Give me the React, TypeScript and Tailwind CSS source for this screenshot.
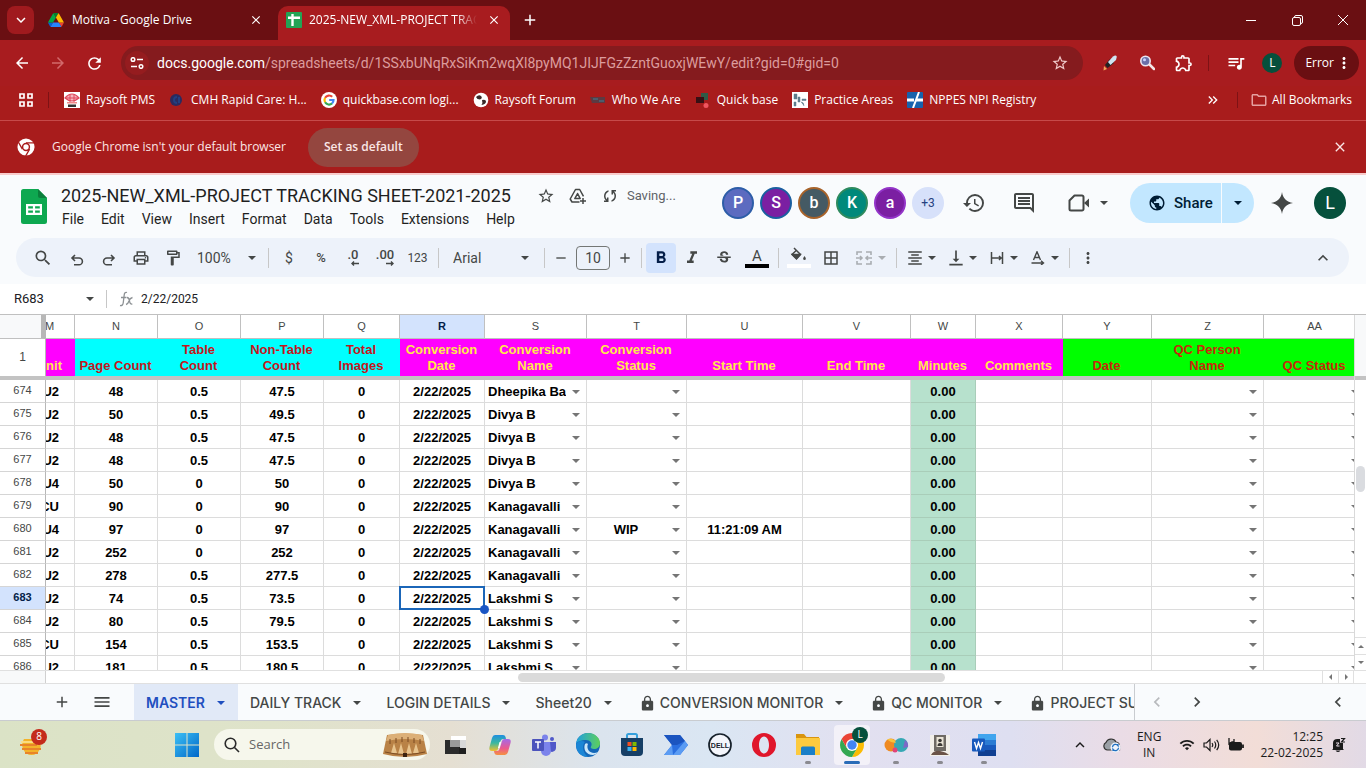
import type { ReactNode } from "react";
import clsx from "clsx";
import {
  MdAdd,
  MdArrowBack,
  MdArrowForward,
  MdBorderAll,
  MdChevronLeft,
  MdChevronRight,
  MdClose,
  MdFormatAlignCenter,
  MdFormatBold,
  MdFormatItalic,
  MdHistory,
  MdKeyboardArrowDown,
  MdKeyboardArrowUp,
  MdKeyboardDoubleArrowRight,
  MdLock,
  MdMenu,
  MdMoreVert,
  MdOutlineComment,
  MdOutlineExtension,
  MdOutlineFolder,
  MdOutlineFormatPaint,
  MdOutlinePrint,
  MdPublic,
  MdQueueMusic,
  MdRefresh,
  MdRemove,
  MdSearch,
  MdStarBorder,
  MdStrikethroughS,
  MdVerticalAlignBottom,
  MdWifi,
} from "react-icons/md";

const chromeFont = "font-['Open_Sans','Noto_Sans',sans-serif]";
const sheetsFont = "font-[Roboto,'Liberation_Sans',sans-serif]";

function Caret({ className = "text-[#444746]" }: { className?: string }) {
  return (
    <svg viewBox="0 0 8 4" className={clsx("h-1 w-2 shrink-0", className)} fill="currentColor" aria-hidden="true">
      <path d="M0 0h8L4 4z" />
    </svg>
  );
}

/* ---------- Logos ---------- */

function DriveLogo() {
  return (
    <svg viewBox="0 0 88 78" className="h-[14px] w-4" aria-hidden="true">
      <path fill="#0066da" d="m6.6 66.9 3.85 6.6c.8 1.4 2 2.5 3.3 3.3L27.5 53H0c0 1.55.4 3.1 1.2 4.5z" />
      <path fill="#00ac47" d="M43.65 25 29.9 1.2c-1.35.8-2.5 1.9-3.3 3.3L1.2 48.5C.4 49.9 0 51.5 0 53h27.5z" />
      <path fill="#ea4335" d="M73.55 76.8c1.35-.8 2.5-1.9 3.3-3.3l1.6-2.75L86.1 57.5c.8-1.4 1.2-2.95 1.2-4.5H59.8l5.85 11.5z" />
      <path fill="#00832d" d="M43.65 25 57.4 1.2C56.05.4 54.5 0 52.9 0H34.4c-1.6 0-3.15.45-4.5 1.2z" />
      <path fill="#2684fc" d="M59.8 53H27.5L13.75 76.8c1.35.8 2.9 1.2 4.5 1.2h50.8c1.6 0 3.15-.45 4.5-1.2z" />
      <path fill="#ffba00" d="M73.4 26.5 60.7 4.5c-.8-1.4-1.95-2.5-3.3-3.3L43.65 25 59.8 53h27.45c0-1.55-.4-3.1-1.2-4.5z" />
    </svg>
  );
}

function SheetsFavicon() {
  return (
    <svg viewBox="0 0 16 16" className="size-4 shrink-0" aria-hidden="true">
      <rect width="16" height="16" rx="1" fill="#23a455" />
      <path d="M2 4.500h12v2.400H7.700V14H5.300V6.900H2z M5.300 2h2.400v3H5.300z" fill="#fff" />
    </svg>
  );
}

function SheetsLogo() {
  return (
    <svg viewBox="0 0 26 35" className="h-[35px] w-[26px]" aria-hidden="true">
      <path d="M2.500 0H17l9 9v23.500A2.500 2.500 0 0 1 23.500 35h-21A2.500 2.500 0 0 1 0 32.500v-30A2.500 2.500 0 0 1 2.500 0z" fill="#0ea850" />
      <path d="M17 0l9 9h-7a2 2 0 0 1-2-2z" fill="#0a7f3b" />
      <path d="M5 15h16v11H5z M7.200 17.200v2.300h4.700v-2.300z M14.100 17.200v2.300h4.700v-2.300z M7.200 21.500v2.300h4.700v-2.300z M14.100 21.500v2.300h4.700v-2.300z" fill="#fff" fillRule="evenodd" />
    </svg>
  );
}

function ChromeMono() {
  return (
    <svg viewBox="0 0 20 20" className="size-[18px]" aria-hidden="true">
      <circle cx="10" cy="10" r="9.500" fill="#fff" />
      <circle cx="10" cy="10" r="4.600" fill="#a81c1c" />
      <circle cx="10" cy="10" r="3" fill="#fff" />
      <path d="M10 5.400h9M6 12.300 1.600 4.700M14 12.300 9.600 20" stroke="#a81c1c" strokeWidth="1.500" />
    </svg>
  );
}

function ChromeColor({ className }: { className: string }) {
  return (
    <svg viewBox="0 0 24 24" className={className} aria-hidden="true">
      <path d="M12 6h10.390A12 12 0 0 1 12 24l5.200-9z" fill="#fbbc04" />
      <path d="M6.800 15 1.610 6A12 12 0 0 0 12 24l5.200-9z" fill="#34a853" />
      <path d="M12 6h10.390A12 12 0 0 0 1.610 6l5.190 9z" fill="#ea4335" />
      <circle cx="12" cy="12" r="6" fill="#fff" />
      <circle cx="12" cy="12" r="4.700" fill="#4285f4" />
    </svg>
  );
}

function GoogleG() {
  return (
    <svg viewBox="0 0 16 16" className="size-4" aria-hidden="true">
      <circle cx="8" cy="8" r="8" fill="#fff" />
      <g fill="none" strokeWidth="2.200">
        <path d="M11.200 4.800A4.500 4.500 0 0 0 4.100 5.800" stroke="#ea4335" />
        <path d="M4.100 5.800a4.500 4.500 0 0 0 0 4.500" stroke="#fbbc04" />
        <path d="M4.100 10.300a4.500 4.500 0 0 0 6.900 1.100" stroke="#34a853" />
        <path d="M11 11.400A4.500 4.500 0 0 0 12.500 8H8.200" stroke="#4285f4" />
      </g>
    </svg>
  );
}

/* ---------- Browser window ---------- */

function TabStrip() {
  return (
    <div className="flex h-10 items-center bg-[#6a0f12] text-xs text-white">
      <button aria-label="Search tabs" className="ml-[7px] flex h-7 w-[27px] items-center justify-center rounded-lg bg-[#a01a1e]">
        <MdKeyboardArrowDown className="size-[18px]" />
      </button>
      <div className="ml-[14px] flex w-[230px] items-center gap-2">
        <DriveLogo />
        <span>Motiva - Google Drive</span>
        <button aria-label="Close Motiva tab" className="mr-[15px] ml-auto">
          <MdClose className="size-[14px]" />
        </button>
      </div>
      <div className="mt-1.5 flex w-[232px] items-center gap-[7px] self-stretch rounded-t-[10px] bg-[#a81c1f] pr-[9px] pb-1.5 pl-2">
        <SheetsFavicon />
        <span className="w-[168px] overflow-hidden whitespace-nowrap [mask-image:linear-gradient(90deg,#000_88%,transparent)]">2025-NEW_XML-PROJECT TRACKING SHEET</span>
        <button aria-label="Close sheet tab" className="ml-auto">
          <MdClose className="size-[14px]" />
        </button>
      </div>
      <button aria-label="New tab" className="ml-[11px]">
        <MdAdd className="size-[18px]" />
      </button>
      <div className="ml-auto flex items-center">
        <button aria-label="Minimize" className="flex w-[46px] justify-center">
          <svg viewBox="0 0 10 10" className="size-[10px]" stroke="currentColor"><path d="M0 5.500h10" /></svg>
        </button>
        <button aria-label="Restore" className="flex w-[46px] justify-center">
          <svg viewBox="0 0 11 11" className="size-[11px]" stroke="currentColor" fill="none">
            <rect x=".5" y="2.500" width="8" height="8" rx="1.500" />
            <path d="M2.500 2.500V2A1.500 1.500 0 0 1 4 .5h5A1.500 1.500 0 0 1 10.500 2v5A1.500 1.500 0 0 1 9 8.500h-.5" />
          </svg>
        </button>
        <button aria-label="Close window" className="flex w-[46px] justify-center">
          <svg viewBox="0 0 10 10" className="size-[10px]" stroke="currentColor"><path d="M0 0l10 10M10 0 0 10" /></svg>
        </button>
      </div>
    </div>
  );
}

function AddressBar() {
  return (
    <div className="flex h-[46px] items-center bg-[#a81c1f] pr-[7px] pl-1 text-white">
      <button aria-label="Back" className="flex w-9 justify-center"><MdArrowBack className="size-[18px]" /></button>
      <button aria-label="Forward" className="flex w-9 justify-center text-[#d2696b]"><MdArrowForward className="size-[18px]" /></button>
      <button aria-label="Reload" className="flex w-9 justify-center"><MdRefresh className="size-[19px]" /></button>
      <div className="ml-[9px] flex h-[34px] min-w-0 flex-1 items-center rounded-full bg-[#851b1e] pr-3.5 pl-1">
        <button aria-label="View site information" className="flex size-6 items-center justify-center rounded-full bg-[#951c1f]">
          <svg viewBox="0 0 14 12" className="h-3 w-[14px]" fill="none" stroke="currentColor" strokeWidth="1.500">
            <circle cx="3" cy="2.500" r="1.800" />
            <path d="M7 2.500h6M1 9.500h6" />
            <circle cx="11" cy="9.500" r="1.800" />
          </svg>
        </button>
        <div role="textbox" aria-label="Address" className="ml-2 min-w-0 flex-1 overflow-hidden font-[Roboto,sans-serif] text-sm whitespace-nowrap text-[#dc9c9d]">
          <span className="text-white">docs.google.com</span>/spreadsheets/d/1SSxbUNqRxSiKm2wqXl8pyMQ1JIJFGzZzntGuoxjWEwY/edit?gid=0#gid=0
        </div>
        <button aria-label="Bookmark this tab"><MdStarBorder className="size-[18px] text-[#f0caca]" /></button>
      </div>
      <div className="ml-2 flex items-center">
        <button aria-label="Color picker extension" className="flex w-[37px] justify-center">
          <svg viewBox="0 0 16 16" className="size-4">
            <path d="M2 11l3 3-3.500 1.500z" fill="#f2a65a" />
            <path d="M3 10l5-6 4 4-6.500 5z" fill="#222" />
            <path d="M6 7l5-5.500q3-2 3.800.3L14 5l-5.500 5z" fill="#cfe3f1" />
          </svg>
        </button>
        <button aria-label="Zoom extension" className="flex w-[37px] justify-center">
          <svg viewBox="0 0 16 16" className="size-4">
            <path d="M10 9l5 5" stroke="#f3e8e8" strokeWidth="2.500" strokeLinecap="round" />
            <circle cx="6.500" cy="6" r="4.700" fill="#6a6fa8" stroke="#ece6f0" strokeWidth="1.600" />
            <circle cx="5.500" cy="4.800" r="1.500" fill="#cdd4ff" />
          </svg>
        </button>
        <button aria-label="Extensions" className="flex w-[37px] justify-center"><MdOutlineExtension className="size-5" /></button>
        <div className="ml-1.5 h-4 w-px bg-[#7d1215]" />
        <button aria-label="Media controls" className="ml-[17px]"><MdQueueMusic className="size-5" /></button>
        <button aria-label="Profile" className="ml-4 flex size-5 items-center justify-center rounded-full bg-[#06503c] text-xs">L</button>
        <button className="ml-3 flex h-[34px] items-center rounded-full bg-[#6a0f12] pr-1.5 pl-[11px] text-xs">
          Error
          <MdMoreVert className="ml-px size-[18px]" />
        </button>
      </div>
    </div>
  );
}

const bookmarks: { label: string; icon: ReactNode }[] = [
  {
    label: "Raysoft PMS",
    icon: (
      <svg viewBox="0 0 16 16" className="size-4">
        <rect width="16" height="16" fill="#fff" />
        <path d="M1 6q7-8 14 0q-7 6-14 0z" fill="#f4b6be" stroke="#e0455a" strokeWidth="1.200" />
        <path d="M6 2.500v8M10 2.500v8M2 6h12" stroke="#e0455a" />
        <path d="M3 10h10v1.500H3z" fill="#e88" />
        <path d="M4 12.500h8V15H4z" fill="#333" />
      </svg>
    ),
  },
  {
    label: "CMH Rapid Care: H...",
    icon: (
      <svg viewBox="0 0 16 16" className="size-4">
        <circle cx="7" cy="8" r="6" fill="#2b2a5e" />
        <path d="M8 5a3 3 0 1 0 0 6M10 5v6" stroke="#233f80" strokeWidth="2" fill="none" />
      </svg>
    ),
  },
  { label: "quickbase.com logi...", icon: <GoogleG /> },
  {
    label: "Raysoft Forum",
    icon: (
      <svg viewBox="0 0 16 16" className="size-4">
        <circle cx="8" cy="8" r="7.300" fill="#fff" />
        <path d="M3 5q3-3 5-1t-1 3.500q-3 0-4-2.500zM9 8q4-1 4 1.500T8.500 13q1.500-2 .5-5z" fill="#3a2a2a" />
      </svg>
    ),
  },
  {
    label: "Who We Are",
    icon: (
      <svg viewBox="0 0 16 16" className="size-4">
        <path d="M0 5h15v6H2z" fill="#5d3a42" />
        <path d="M3 7h5M9 9h5" stroke="#486a7c" strokeWidth="1.500" />
      </svg>
    ),
  },
  {
    label: "Quick base",
    icon: (
      <svg viewBox="0 0 16 16" className="size-4">
        <path d="M6 1h7v7H6z" fill="#2f5a46" />
        <path d="M1 5h8v6H1z" fill="#371014" />
        <circle cx="11" cy="13.500" r="2.500" fill="#f0555f" />
      </svg>
    ),
  },
  {
    label: "Practice Areas",
    icon: (
      <svg viewBox="0 0 16 16" className="size-4">
        <rect width="16" height="16" fill="#fff" />
        <path d="M2 2h3v5H2zM6 5h2v5H6zM10 7h4v1.500h-4zM9 10q3 0 3 4M2 10h2v4H2z" fill="#5f7d8c" stroke="#5f7d8c" strokeWidth=".5" />
      </svg>
    ),
  },
  {
    label: "NPPES NPI Registry",
    icon: (
      <svg viewBox="0 0 16 16" className="size-4">
        <rect width="16" height="16" rx="1" fill="#1762ad" />
        <path d="M0 6.500h7v3H0zM10 6.500h6v3h-7z" fill="#fff" />
        <path d="M12 0 6 16" stroke="#fff" strokeWidth="2" />
      </svg>
    ),
  },
];

function BookmarksBar() {
  return (
    <nav className="flex h-[34px] items-center bg-[#a81c1c] pb-1.5 text-xs text-white">
      <button aria-label="Apps" className="ml-[19px]">
        <svg viewBox="0 0 14 14" className="size-[14px]" fill="none" stroke="currentColor" strokeWidth="1.700">
          <path d="M1 1h4v4H1zM9 1h4v4H9zM1 9h4v4H1zM9 9h4v4H9z" />
        </svg>
      </button>
      <div className="mx-[15px] h-4 w-px bg-[#7d1215]" />
      <ul className="flex items-center gap-[14px]">
        {bookmarks.map((b) => (
          <li key={b.label}>
            <a href="#" className="flex items-center gap-1.5 whitespace-nowrap">
              {b.icon}
              {b.label}
            </a>
          </li>
        ))}
      </ul>
      <button aria-label="More bookmarks" className="mr-4 ml-auto"><MdKeyboardDoubleArrowRight className="size-4" /></button>
      <div className="h-4 w-px bg-[#7d1215]" />
      <a href="#" className="mr-[14px] ml-3 flex items-center gap-1">
        <MdOutlineFolder className="size-[18px] text-[#e5a0a0]" />
        All Bookmarks
      </a>
    </nav>
  );
}

function DefaultBrowserBar() {
  return (
    <div className="flex h-[53px] items-center border-t border-[#c64a4a] bg-[#a81c1c] pl-[17px] text-xs text-[#fbe6e6]">
      <ChromeMono />
      <p className="ml-[17px]">Google Chrome isn't your default browser</p>
      <button className="ml-[22px] h-[39px] rounded-full bg-[#94463f] px-4 font-semibold">Set as default</button>
      <button aria-label="Dismiss" className="mr-[18px] ml-auto"><MdClose className="size-4" /></button>
    </div>
  );
}

/* ---------- Sheets header ---------- */

const menus = ["File", "Edit", "View", "Insert", "Format", "Data", "Tools", "Extensions", "Help"];

const collaborators = [
  { letter: "P", style: "border-[#2d5da8] bg-[#5c6bc0]" },
  { letter: "S", style: "border-[#1a5fa0] bg-[#7b1fa2]" },
  { letter: "b", style: "border-[#a8632a] bg-[#455a64]" },
  { letter: "K", style: "border-[#2e8a5e] bg-[#00897b]" },
  { letter: "a", style: "border-[#9334c8] bg-[#7b1fa2]" },
];

function DocHeader() {
  return (
    <header className="flex h-[65px] items-start border-t-2 border-[#f9cccc] bg-[#f9fbfd] pl-[21px] text-[#1f1f1f]">
      <div className="mt-3.5"><SheetsLogo /></div>
      <div className="mt-[9px] ml-[14px]">
        <div className="flex items-center">
          <h1 className="text-[18px] leading-6 font-normal whitespace-nowrap">2025-NEW_XML-PROJECT TRACKING SHEET-2021-2025</h1>
          <button aria-label="Star" className="ml-[26px]"><MdStarBorder className="size-[18px] text-[#444746]" /></button>
          <button aria-label="Add shortcut to Drive" className="ml-[14px]">
            <svg viewBox="0 0 18 18" className="size-[18px]" fill="none" stroke="#444746" strokeWidth="1.500" strokeLinejoin="round">
              <path d="M10.500 15H3L1.200 12 6.500 2.500h4.200l3.800 6.800" />
              <path d="M8.600 6.500 5.800 11.600h5.400z" />
              <path d="M14 11v6M11 14h6" />
            </svg>
          </button>
          <svg viewBox="0 0 24 24" className="ml-[14px] size-[18px]" fill="#444746" aria-hidden="true">
            <path d="M4 20v-2h2.750l-.4-.35q-1.300-1.150-1.825-2.625T4 12.050q0-2.775 1.663-4.937T10 4.250v2.100q-1.800.65-2.900 2.213T6 12.050q0 1.125.425 2.188T7.750 16.200l.25.25V14h2v6H4Zm10-.25v-2.100q1.800-.65 2.900-2.212T18 11.950q0-1.125-.425-2.187T16.250 7.800L16 7.550V10h-2V4h6v2h-2.750l.4.35q1.225 1.225 1.788 2.663T20 11.950q0 2.775-1.663 4.938T14 19.750Z" />
          </svg>
          <span className="ml-2 text-[13px] text-[#5f6368]">Saving...</span>
        </div>
        <nav className="flex gap-[17px] pl-px text-sm leading-[22px]">
          {menus.map((m) => (
            <button key={m}>{m}</button>
          ))}
        </nav>
      </div>
      <div className="mt-2 mr-5 ml-auto flex h-10 items-center text-[#444746]">
        <div className="flex gap-1.5">
          {collaborators.map((c) => (
            <div key={c.letter} className={clsx("flex size-8 items-center justify-center rounded-full border-2 text-base font-medium text-white", c.style)}>
              {c.letter}
            </div>
          ))}
          <button className="flex size-8 items-center justify-center rounded-full bg-[#d7e1fa] text-xs text-[#26427f]">+3</button>
        </div>
        <button aria-label="Version history" className="ml-[18px]"><MdHistory className="size-6" /></button>
        <button aria-label="Comments" className="ml-[26px]"><MdOutlineComment className="size-6" /></button>
        <button aria-label="Join a call" className="ml-[32px] flex items-center gap-2.5">
          <svg viewBox="0 0 22 18" className="h-[18px] w-[22px]" fill="none" stroke="currentColor" strokeWidth="2">
            <path d="M6.500 1.500H14a1.500 1.500 0 0 1 1.500 1.500v12a1.500 1.500 0 0 1-1.500 1.500H3A1.500 1.500 0 0 1 1.500 15V6.500z" strokeLinejoin="round" />
            <path d="M16 9l5-4.500v9z" fill="currentColor" stroke="none" />
          </svg>
          <Caret />
        </button>
        <div className="ml-[22px] flex h-10 items-stretch gap-px rounded-full text-[#001d35]">
          <button className="flex w-[91px] items-center gap-2 rounded-l-full bg-[#c2e7ff] pl-[18px] text-[15px] font-medium">
            <MdPublic className="size-[18px]" />
            Share
          </button>
          <button aria-label="Sharing options" className="flex w-8 items-center justify-center rounded-r-full bg-[#c2e7ff]">
            <Caret className="text-[#001d35]" />
          </button>
        </div>
        <button aria-label="Ask Gemini" className="ml-[17px]">
          <svg viewBox="0 0 22 22" className="size-[22px]" fill="currentColor"><path d="M11 0c.8 6.200 4.800 10.200 11 11-6.200.8-10.200 4.800-11 11-.8-6.200-4.800-10.200-11-11 6.200-.8 10.200-4.800 11-11z" /></svg>
        </button>
        <button aria-label="Account" className="ml-[21px] flex size-8 items-center justify-center rounded-full bg-[#06503c] text-lg text-white">L</button>
      </div>
    </header>
  );
}

/* ---------- Toolbar ---------- */

function Tool({ label, width = "w-8", children }: { label: string; width?: string; children: ReactNode }) {
  return (
    <button aria-label={label} className={clsx("flex h-[30px] shrink-0 items-center justify-center", width)}>
      {children}
    </button>
  );
}

function MenuTool({ label, children }: { label: string; children: ReactNode }) {
  return (
    <button aria-label={label} className="flex h-[30px] w-[41px] shrink-0 items-center">
      <span className="flex w-[27px] justify-center">{children}</span>
      <Caret />
    </button>
  );
}

function Divider() {
  return <div className="mx-1 h-5 w-px shrink-0 bg-[#c7c7c7]" />;
}

function DecimalIcon({ text, dir }: { text: string; dir: "left" | "right" }) {
  return (
    <span className="flex flex-col items-end text-[13px] leading-[12px] font-medium">
      {text}
      <svg viewBox="0 0 8 5" className={clsx("h-[5px] w-2", dir === "right" && "-scale-x-100")} fill="none" stroke="currentColor" strokeWidth="1.400">
        <path d="M8 2.500H1M3 .5l-2 2 2 2" />
      </svg>
    </span>
  );
}

function Toolbar() {
  return (
    <div className="bg-[#f9fbfd] pr-[17px] pb-[7px] pl-4">
      <div role="toolbar" className="flex h-[39px] items-center rounded-full bg-[#edf2fa] pl-[9px] text-[#444746]">
        <Tool label="Search menus" width="w-9"><MdSearch className="size-5" /></Tool>
        <Tool label="Undo">
          <svg viewBox="0 0 14 12" className="mt-1 h-3 w-[14px]" fill="none" stroke="currentColor" strokeWidth="1.600"><path d="M5 1 2 4l3 3M2 4h7a3.400 3.400 0 0 1 0 6.800H4" /></svg>
        </Tool>
        <Tool label="Redo">
          <svg viewBox="0 0 14 12" className="mt-1 h-3 w-[14px]" fill="none" stroke="currentColor" strokeWidth="1.600"><path d="M9 1l3 3-3 3M12 4H5a3.400 3.400 0 0 0 0 6.800h5" /></svg>
        </Tool>
        <Tool label="Print"><MdOutlinePrint className="size-[18px]" /></Tool>
        <Tool label="Paint format"><MdOutlineFormatPaint className="size-[18px]" /></Tool>
        <label className="relative flex w-[75px] shrink-0 items-center">
          <span className="sr-only">Zoom</span>
          <select className="w-full appearance-none pl-2 text-sm"><option>100%</option></select>
          <span className="pointer-events-none absolute right-2"><Caret /></span>
        </label>
        <Divider />
        <Tool label="Format as currency"><span className="text-sm">$</span></Tool>
        <Tool label="Format as percent"><span className="text-[13px] font-medium">%</span></Tool>
        <Tool label="Decrease decimal places"><DecimalIcon text=".0" dir="left" /></Tool>
        <Tool label="Increase decimal places"><DecimalIcon text=".00" dir="right" /></Tool>
        <Tool label="More formats" width="w-[33px]"><span className="text-xs">123</span></Tool>
        <Divider />
        <label className="relative flex w-[97px] shrink-0 items-center">
          <span className="sr-only">Font</span>
          <select className="w-full appearance-none pl-2.5 text-sm"><option>Arial</option></select>
          <span className="pointer-events-none absolute right-[11px]"><Caret /></span>
        </label>
        <Divider />
        <Tool label="Decrease font size" width="w-6"><MdRemove className="size-4" /></Tool>
        <input aria-label="Font size" defaultValue="10" className="mx-[3px] h-6 w-[34px] shrink-0 rounded-sm border border-[#747775] text-center text-sm" />
        <Tool label="Increase font size" width="w-6"><MdAdd className="size-4" /></Tool>
        <Divider />
        <button aria-label="Bold" aria-pressed="true" className="flex size-[30px] shrink-0 items-center justify-center rounded bg-[#d3e3fd] text-[#041e49]">
          <MdFormatBold className="size-5" />
        </button>
        <Tool label="Italic"><MdFormatItalic className="size-5" /></Tool>
        <Tool label="Strikethrough"><MdStrikethroughS className="size-[18px]" /></Tool>
        <Tool label="Text color" width="w-[34px]">
          <span className="flex w-6 flex-col items-center border-b-4 border-black text-[15px] leading-4">A</span>
        </Tool>
        <Divider />
        <Tool label="Fill color">
          <span className="flex w-6 justify-center border-b-4 border-white">
            <svg viewBox="0 0 18 17" className="h-[17px] w-[18px]" fill="none" stroke="currentColor" strokeWidth="1.500">
              <path d="M4 1l6.500 6.500L6.500 12 2 7.500l4.500-4.200" />
              <path d="M2.500 7.500h7.500L6.500 11.500z" fill="currentColor" />
              <path d="M14.500 9q1.800 2.200 1.300 3.200a1.500 1.500 0 0 1-2.600 0Q12.700 11.200 14.500 9z" fill="currentColor" stroke="none" />
            </svg>
          </span>
        </Tool>
        <Tool label="Borders"><MdBorderAll className="size-[18px]" /></Tool>
        <button aria-label="Merge cells" className="flex h-[30px] w-[45px] shrink-0 items-center gap-1.5 pl-[9px] opacity-40">
          <svg viewBox="0 0 16 14" className="h-[14px] w-4" fill="none" stroke="currentColor" strokeWidth="1.600">
            <path d="M6 1H1v3M10 1h5v3M6 13H1v-3M10 13h5v-3M0 7h6M4 5l2 2-2 2M16 7h-6M12 5l-2 2 2 2" />
          </svg>
          <Caret />
        </button>
        <Divider />
        <MenuTool label="Horizontal align"><MdFormatAlignCenter className="size-[18px]" /></MenuTool>
        <MenuTool label="Vertical align"><MdVerticalAlignBottom className="size-5" /></MenuTool>
        <MenuTool label="Text wrapping">
          <svg viewBox="0 0 14 14" className="size-[14px]" fill="none" stroke="currentColor" strokeWidth="1.500"><path d="M1.500 1v12M12.500 1v12M2 7h10M9 5l2 2-2 2" /></svg>
        </MenuTool>
        <MenuTool label="Text rotation">
          <svg viewBox="0 0 14 14" className="size-[14px]" fill="none" stroke="currentColor" strokeWidth="1.400"><path d="M2.500 9 6 .8 9.500 9M3.600 6.500h4.800M.5 12h11M10 9.800l2.500 2.200-2.500 2" /></svg>
        </MenuTool>
        <Divider />
        <Tool label="More" width="w-7"><MdMoreVert className="size-[18px]" /></Tool>
        <button aria-label="Hide the menus" className="mr-4 ml-auto"><MdKeyboardArrowUp className="size-5" /></button>
      </div>
    </div>
  );
}

function FormulaBar() {
  return (
    <div className="flex h-[31px] items-center border-b border-[#c0c0c0] bg-white text-[13px] text-[#202124]">
      <label className="relative flex w-[106px] items-center">
        <span className="sr-only">Name box</span>
        <input defaultValue="R683" className="w-full pl-3.5" />
        <button aria-label="Named ranges" className="absolute right-3"><Caret /></button>
      </label>
      <div className="h-[18px] w-px bg-[#c7c7c7]" />
      <svg viewBox="0 0 14 16" className="ml-3 h-4 w-[14px]" fill="none" stroke="#8d9194" strokeWidth="1.300" aria-hidden="true">
        <path d="M8 1.500Q5.500.6 5.200 4L4.200 12Q3.800 15 1 14.500M2 6.500h5.500M8 6.500q2 0 2.500 3.500t2.800 3M13.500 6.500Q11 7 10 10t-3 3.500" />
      </svg>
      <input aria-label="Formula" defaultValue="2/22/2025" className="ml-2 flex-1 text-xs" />
    </div>
  );
}

/* ---------- Grid ---------- */

type HeaderTone = "pink" | "cyan" | "lime";

const columns: { id: string; width: string; title: string; tone: HeaderTone }[] = [
  { id: "M", width: "w-[29px]", title: "Unit", tone: "pink" },
  { id: "N", width: "w-[83px]", title: "Page Count", tone: "cyan" },
  { id: "O", width: "w-[83px]", title: "Table\nCount", tone: "cyan" },
  { id: "P", width: "w-[83px]", title: "Non-Table\nCount", tone: "cyan" },
  { id: "Q", width: "w-[76px]", title: "Total\nImages", tone: "cyan" },
  { id: "R", width: "w-[85px]", title: "Conversion\nDate", tone: "pink" },
  { id: "S", width: "w-[102px]", title: "Conversion\nName", tone: "pink" },
  { id: "T", width: "w-[100px]", title: "Conversion\nStatus", tone: "pink" },
  { id: "U", width: "w-[116px]", title: "Start Time", tone: "pink" },
  { id: "V", width: "w-[108px]", title: "End Time", tone: "pink" },
  { id: "W", width: "w-[65px]", title: "Minutes", tone: "pink" },
  { id: "X", width: "w-[87px]", title: "Comments", tone: "pink" },
  { id: "Y", width: "w-[89px]", title: "Date", tone: "lime" },
  { id: "Z", width: "w-[112px]", title: "QC Person\nName", tone: "lime" },
  { id: "AA", width: "w-[102px]", title: "QC Status", tone: "lime" },
];

const tones: Record<HeaderTone, string> = {
  pink: "bg-[#ff00ff] text-[#ffe94a]",
  cyan: "bg-[#00ffff] text-[#c4161c]",
  lime: "bg-[#00ff00] text-[#c8280a]",
};

type Row = { n: number; unit: string; pages: string; table: string; nonTable: string; name: string; status?: string; start?: string };

const rows: Row[] = [
  { n: 674, unit: "U2", pages: "48", table: "0.5", nonTable: "47.5", name: "Dheepika Ba" },
  { n: 675, unit: "U2", pages: "50", table: "0.5", nonTable: "49.5", name: "Divya B" },
  { n: 676, unit: "U2", pages: "48", table: "0.5", nonTable: "47.5", name: "Divya B" },
  { n: 677, unit: "U2", pages: "48", table: "0.5", nonTable: "47.5", name: "Divya B" },
  { n: 678, unit: "U4", pages: "50", table: "0", nonTable: "50", name: "Divya B" },
  { n: 679, unit: "CU", pages: "90", table: "0", nonTable: "90", name: "Kanagavalli" },
  { n: 680, unit: "U4", pages: "97", table: "0", nonTable: "97", name: "Kanagavalli", status: "WIP", start: "11:21:09 AM" },
  { n: 681, unit: "U2", pages: "252", table: "0", nonTable: "252", name: "Kanagavalli" },
  { n: 682, unit: "U2", pages: "278", table: "0.5", nonTable: "277.5", name: "Kanagavalli" },
  { n: 683, unit: "U2", pages: "74", table: "0.5", nonTable: "73.5", name: "Lakshmi S" },
  { n: 684, unit: "U2", pages: "80", table: "0.5", nonTable: "79.5", name: "Lakshmi S" },
  { n: 685, unit: "CU", pages: "154", table: "0.5", nonTable: "153.5", name: "Lakshmi S" },
  { n: 686, unit: "U2", pages: "181", table: "0.5", nonTable: "180.5", name: "Lakshmi S" },
];

const cell = "h-[23px] border-r border-b border-[#dcdcdc] p-0 pt-0.5";

function PickerCell({ value = "", label, align = "left" }: { value?: string; label: string; align?: "left" | "center" }) {
  return (
    <td className={cell}>
      <div className="flex items-center justify-between pr-1.5 pl-[3px]">
        <span className={clsx("flex-1 overflow-hidden whitespace-nowrap", align === "center" ? "pr-1 text-center" : "text-left")}>{value}</span>
        <button aria-label={label} className="ml-1.5"><Caret className="text-[#757575]" /></button>
      </div>
    </td>
  );
}

function Grid() {
  return (
    <div className="flex min-h-0 flex-1">
      <div className="min-w-0 flex-1 overflow-hidden">
        <table className="w-[1366px] min-w-full table-fixed border-separate border-spacing-0 text-center font-['Liberation_Sans',Arial,sans-serif] text-[13px] leading-4 font-bold text-black">
          <colgroup>
            <col className="w-[46px]" />
            {columns.map((c) => (
              <col key={c.id} className={c.width} />
            ))}
          </colgroup>
          <thead>
            <tr>
              <th className="h-6 border-r-[5px] border-b border-r-[#b7b7b7] border-b-[#c0c0c0] bg-[#f8f9fa] p-0" />
              {columns.map((c) => (
                <th
                  key={c.id}
                  className={clsx(
                    "h-6 overflow-hidden border-r border-b border-[#c0c0c0] p-0 pb-px text-[11px]",
                    c.id === "R" ? "bg-[#d3e3fd] font-bold text-[#041e49]" : "bg-white font-normal text-[#444746]",
                  )}
                >
                  {c.id === "M" ? <div className="-ml-px text-left">M</div> : c.id}
                </th>
              ))}
            </tr>
            <tr>
              <th className="h-[37px] border-r border-[#b7b7b7] p-0 pb-0.5 text-xs font-normal text-[#444746]">1</th>
              {columns.map((c) => (
                <th key={c.id} className={clsx("h-[37px] overflow-hidden p-0 pr-0.5 pb-[2px] align-bottom whitespace-pre-line", tones[c.tone])}>
                  {c.id === "M" ? <div className="flex justify-end pr-[11px]">{c.title}</div> : c.title}
                </th>
              ))}
            </tr>
            <tr>
              <td colSpan={16} className="h-1 bg-[#c3c3c3] p-0" />
            </tr>
          </thead>
          <tbody>
            {rows.map((r) => {
              const active = r.n === 683;
              return (
                <tr key={r.n}>
                  <th
                    className={clsx(
                      "h-[23px] border-r border-b border-r-[#b7b7b7] border-b-[#d5d5d5] p-0 pb-0.5 text-[11px]",
                      active ? "bg-[#d3e3fd] font-bold text-[#041e49]" : "bg-white font-normal text-[#444746]",
                    )}
                  >
                    {r.n}
                  </th>
                  <td className={cell}>
                    <div className="flex justify-end overflow-hidden pr-[15px]">{r.unit}</div>
                  </td>
                  <td className={cell}>{r.pages}</td>
                  <td className={cell}>{r.table}</td>
                  <td className={cell}>{r.nonTable}</td>
                  <td className={cell}>0</td>
                  <td className={clsx(cell, active && "relative")}>
                    2/22/2025
                    {active && (
                      <>
                        <span className="absolute -inset-px border-2 border-[#1b66b8]" />
                        <span className="absolute -right-[5px] -bottom-[5px] z-10 size-[9px] rounded-full bg-[#1a55c4]" />
                      </>
                    )}
                  </td>
                  <PickerCell value={r.name} label={`Choose conversion name, row ${r.n}`} />
                  <PickerCell value={r.status} label={`Choose conversion status, row ${r.n}`} align="center" />
                  <td className={cell}>{r.start}</td>
                  <td className={cell} />
                  <td className="h-[23px] border-r border-b border-[#a9cdb9] bg-[#b7e1cd] p-0 pt-0.5">0.00</td>
                  <td className={cell} />
                  <td className={cell} />
                  <PickerCell label={`Choose QC person, row ${r.n}`} />
                  <PickerCell label={`Choose QC status, row ${r.n}`} />
                </tr>
              );
            })}
          </tbody>
        </table>
      </div>
      <div className="flex w-3 flex-col border-l border-[#d9d9d9] bg-white">
        <div className="h-[61px] bg-[#f8f9fa]" />
        <div className="h-1 bg-[#c3c3c3]" />
        <div className="mx-px mt-[86px] h-[26px] rounded-full bg-[#dadce0]" />
        <button aria-label="Scroll up" className="mt-auto flex h-[17px] items-center justify-center border-t border-[#e0e0e0]">
          <svg viewBox="0 0 6 3" className="h-[3px] w-1.5" fill="#757575"><path d="M0 3h6L3 0z" /></svg>
        </button>
        <button aria-label="Scroll down" className="flex h-4 items-center justify-center border-t border-[#e0e0e0]">
          <svg viewBox="0 0 6 3" className="h-[3px] w-1.5" fill="#757575"><path d="M0 0h6L3 3z" /></svg>
        </button>
      </div>
    </div>
  );
}

function HorizontalScroll() {
  return (
    <div className="flex h-[14px] items-center border-t border-b border-[#e0e0e0] bg-white pr-3">
      <div className="h-full w-[46px] shrink-0 border-r border-[#d0d0d0] bg-[#f8f9fa]" />
      <div className="ml-[472px] h-[9px] w-[427px] rounded-full bg-[#dadada]" />
      <button aria-label="Scroll left" className="ml-auto flex h-full w-4 items-center justify-center border-l border-[#e0e0e0]">
        <svg viewBox="0 0 3 6" className="h-1.5 w-[3px]" fill="#757575"><path d="M3 0v6L0 3z" /></svg>
      </button>
      <button aria-label="Scroll right" className="flex h-full w-4 items-center justify-center border-x border-[#e0e0e0]">
        <svg viewBox="0 0 3 6" className="h-1.5 w-[3px]" fill="#757575"><path d="M0 0v6l3-3z" /></svg>
      </button>
    </div>
  );
}

const sheets: { name: string; locked?: boolean; active?: boolean }[] = [
  { name: "MASTER", active: true },
  { name: "DAILY TRACK" },
  { name: "LOGIN DETAILS" },
  { name: "Sheet20" },
  { name: "CONVERSION MONITOR", locked: true },
  { name: "QC MONITOR", locked: true },
  { name: "PROJECT SUMMARY", locked: true },
];

function SheetTabs() {
  return (
    <div className="flex h-[37px] items-center border-b border-[#c9ccd0] bg-[#f9fbfd] text-[#444746]">
      <button aria-label="Add sheet" className="ml-[53px]"><MdAdd className="size-[18px]" /></button>
      <button aria-label="All sheets" className="mr-[22px] ml-[21px]"><MdMenu className="size-5" /></button>
      <div className="flex h-full w-[1001px] overflow-hidden border-r border-[#c9ccd0] font-[Inter,Roboto,sans-serif]">
        {sheets.map((s) => (
          <button
            key={s.name}
            className={clsx(
              "flex h-full shrink-0 items-center pt-0.5 pr-[13px] text-sm whitespace-nowrap",
              s.locked ? "pl-[14px]" : "pl-3",
              s.active ? "bg-[#e1e9f7] font-semibold text-[#1f4fbf]" : "font-medium",
            )}
          >
            {s.locked && <MdLock className="mr-1 size-[17px]" />}
            {s.name}
            <Caret className={clsx("ml-3", s.active ? "text-[#1f4fbf]" : "text-[#444746]")} />
          </button>
        ))}
      </div>
      <button aria-label="Scroll tabs left" className="ml-3 text-[#b8babd]"><MdChevronLeft className="size-5" /></button>
      <button aria-label="Scroll tabs right" className="ml-5"><MdChevronRight className="size-5" /></button>
      <button aria-label="Show side panel" className="mr-[18px] ml-auto"><MdChevronLeft className="size-5" /></button>
    </div>
  );
}

/* ---------- Windows taskbar ---------- */

const apps: { name: string; icon: ReactNode; running?: boolean; active?: boolean }[] = [
  {
    name: "Task view",
    icon: (
      <svg viewBox="0 0 24 24" className="size-6">
        <path d="M7 3h15v15H7z" fill="#fff" />
        <path d="M1 7h5v14H1zM6 14h9v7H6z" fill="#2b2b2b" />
        <path d="M6 7h10v7H6z" fill="#9a9a9a" />
        <path d="M15 14h7v7h-7z" fill="#1f1f1f" />
        <path d="M16 7h6v8h-6z" fill="#d8d8d8" />
      </svg>
    ),
  },
  {
    name: "Copilot",
    icon: (
      <svg viewBox="0 0 24 24" className="size-6">
        <defs>
          <linearGradient id="cpA" x1="0" y1="0" x2="0" y2="1"><stop stopColor="#1f8fe0" /><stop offset=".5" stopColor="#3bb8a0" /><stop offset="1" stopColor="#f2c12e" /></linearGradient>
          <linearGradient id="cpB" x1="0" y1="0" x2="0" y2="1"><stop stopColor="#a568e8" /><stop offset=".6" stopColor="#ec5a8c" /><stop offset="1" stopColor="#f5923e" /></linearGradient>
        </defs>
        <path d="M7 2h8q2 0 2.600 2L18 6h-3q-2 0-2.700 2.500L10 16q-.6 2-2.500 2H4q-3.500 0-2.500-4L4 5q.8-3 3-3z" fill="url(#cpA)" />
        <path d="M17 22H9q-2 0-2.600-2L6 18h3q2 0 2.700-2.500L14 8q.6-2 2.500-2H20q3.500 0 2.500 4L20 19q-.8 3-3 3z" fill="url(#cpB)" />
        <path d="M13 9h-1.500L10 15h1.500z" fill="#fff" />
      </svg>
    ),
  },
  {
    name: "Teams",
    icon: (
      <svg viewBox="0 0 24 24" className="size-6">
        <circle cx="13" cy="4.500" r="3" fill="#7b83eb" />
        <circle cx="20" cy="6" r="2" fill="#5059c9" />
        <path d="M9 9h10v9a5 5 0 0 1-10 0z" fill="#7b83eb" />
        <path d="M18 9h6v6a4 4 0 0 1-5 3.800z" fill="#5059c9" />
        <rect x="0" y="6" width="12" height="12" rx="1" fill="#4b53bc" />
        <path d="M3 9h6M6 9v6.500" stroke="#fff" strokeWidth="1.500" />
      </svg>
    ),
  },
  {
    name: "Edge",
    icon: (
      <svg viewBox="0 0 24 24" className="size-6">
        <defs>
          <linearGradient id="edA" x1="0" y1="0" x2="1" y2="0"><stop stopColor="#1f9fe0" /><stop offset="1" stopColor="#5ed05a" /></linearGradient>
        </defs>
        <circle cx="12" cy="12" r="12" fill="#1467b8" />
        <path d="M0 11C1 4 6 0 12 0c7 0 12 5 12 10 0 4-3 6-6 6-2.500 0-4-1-3-2.500C17 10 14 7 10 7 5 7 1 9 0 11z" fill="url(#edA)" />
        <path d="M9 11c-2 5 1 11 8 11q3 0 5-3-4 2-7.500 0C11 17 11 13 12 11q-1.500-1.500-3 0z" fill="#c9e6fa" />
        <path d="M0 12c1-4 6-5 9-3-3 3-3 10 3 15C5 24 0 19 0 12z" fill="#1b86d6" />
      </svg>
    ),
  },
  {
    name: "Microsoft Store",
    icon: (
      <svg viewBox="0 0 24 24" className="size-6">
        <path d="M7 6V2.500Q7 1 8.500 1h7Q17 1 17 2.500V6" fill="none" stroke="#35a0dc" strokeWidth="2" />
        <path d="M1 5h22v14a4 4 0 0 1-4 4H5a4 4 0 0 1-4-4z" fill="#163f66" />
        <path d="M7.500 9H11.500v4H7.500z" fill="#f25022" />
        <path d="M12.500 9h4v4h-4z" fill="#7fba00" />
        <path d="M7.500 14h4v4h-4z" fill="#3bb2f0" />
        <path d="M12.500 14h4v4h-4z" fill="#ffb900" />
      </svg>
    ),
  },
  {
    name: "Power Automate",
    icon: (
      <svg viewBox="0 0 24 24" className="size-6">
        <path d="M0 2h16l8 10-8 10H0l8-10z" fill="#2a6fe0" />
        <path d="M0 2h16l5 6-8 4-5 0z" fill="#1b55c0" />
        <path d="M8 12 0 22h9l12-14 3 4-8 10h-7z" fill="#5b9cf3" />
      </svg>
    ),
  },
  {
    name: "Dell",
    icon: (
      <svg viewBox="0 0 24 24" className="size-6">
        <circle cx="12" cy="12" r="11" fill="#f4f6fb" stroke="#17212b" strokeWidth="1.700" />
        <text x="12" y="14.500" textAnchor="middle" fontSize="7" fontWeight="bold" fontFamily="Liberation Sans" fill="#17212b">DELL</text>
      </svg>
    ),
  },
  {
    name: "Opera",
    icon: (
      <svg viewBox="0 0 24 24" className="size-6">
        <path d="M12 0a12 12 0 1 0 0 24 12 12 0 0 0 0-24zm0 3.500c3 0 5 3.700 5 8.500s-2 8.500-5 8.500S7 16.800 7 12s2-8.500 5-8.500z" fill="#e0162b" fillRule="evenodd" />
      </svg>
    ),
  },
  {
    name: "File Explorer",
    running: true,
    icon: (
      <svg viewBox="0 0 26 24" className="h-6 w-[26px]">
        <path d="M1 1h8l2.500 3H24v6H1z" fill="#d9950f" />
        <path d="M1 5h24v17H1z" fill="#fcca3f" />
        <path d="M6 15q0-1.500 1.500-1.500h11Q20 13.500 20 15v7H6z" fill="#1a7fc8" />
      </svg>
    ),
  },
  {
    name: "Chrome",
    running: true,
    active: true,
    icon: <ChromeColor className="size-6" />,
  },
  {
    name: "Copilot Studio",
    running: true,
    icon: (
      <svg viewBox="0 0 26 24" className="h-6 w-[26px]">
        <circle cx="8" cy="12" r="6.500" fill="#ef8a22" />
        <circle cx="18" cy="12" r="7" fill="#36a8b4" />
        <path d="M4 6.500a6.500 6.500 0 0 1 9 3q-4 1-9-3z" fill="#f6c23c" />
        <path d="M22 7a7 7 0 0 1 3 7l-5 1z" fill="#7d68c6" />
        <circle cx="12" cy="17" r="2.500" fill="#e0447a" />
      </svg>
    ),
  },
  {
    name: "Remote support",
    running: true,
    icon: (
      <svg viewBox="0 0 24 24" className="size-6">
        <rect x="2" y="2" width="20" height="21" fill="#f2efe9" />
        <path d="M6 2h12v16H6z" fill="#6f6a64" />
        <path d="M8.500 4h7v10h-7z" fill="#eae4d6" />
        <circle cx="12" cy="7.500" r="1.800" fill="#3c3935" />
        <path d="M9.500 13q0-3 2.500-3t2.500 3z" fill="#3c3935" />
        <path d="M3 22q3-5 9-4t9 4z" fill="#6b5347" />
      </svg>
    ),
  },
  {
    name: "Word",
    running: true,
    icon: (
      <svg viewBox="0 0 26 24" className="h-6 w-[26px]">
        <path d="M7 1h18v22H7z" fill="#2b7cd3" />
        <path d="M7 1h18v6H7z" fill="#41a5ee" />
        <path d="M7 17h18v6H7z" fill="#103f91" />
        <path d="M7 12h18v5H7z" fill="#185abd" />
        <rect x="1" y="5.500" width="13" height="13" rx="1" fill="#185abd" />
        <path d="M3.500 9 5.500 15.500 7.500 9.500 9.500 15.500 11.500 9" fill="none" stroke="#fff" strokeWidth="1.400" />
      </svg>
    ),
  },
];

function Taskbar() {
  return (
    <footer
      className={clsx(
        "flex h-[47px] items-center text-xs text-[#1b1b1b]",
        "bg-[linear-gradient(90deg,#dbe3c6_0%,#dfe3ca_20%,#e5dfd2_33%,#dbe4ee_44%,#dae6f3_52%,#e2e0f0_63%,#dedff1_74%,#eadce6_82%,#f2ddd7_92%,#e2dae6_100%)]",
      )}
    >
      <button aria-label="Widgets" className="relative ml-5">
        <svg viewBox="0 0 24 24" className="size-6">
          <path d="M4 6h14q4 6 2 10-3 6-8.500 6T3 16q-2-5 1-10z" fill="#f3b32a" />
          <path d="M0 12h17M2 16h19M5 20h13" stroke="#e8842a" strokeWidth="1.800" />
          <path d="M1 9h14" stroke="#fbe08a" strokeWidth="1.800" />
        </svg>
        <span className="absolute -top-1 -right-[3px] flex size-4 items-center justify-center rounded-full bg-[#c42b1c] text-[10px] text-white">8</span>
      </button>
      <button aria-label="Start" className="ml-[121px] flex w-11 justify-center">
        <svg viewBox="0 0 24 24" className="size-6">
          <defs><linearGradient id="win" x1="0" y1="0" x2="1" y2="1"><stop stopColor="#3cc0f5" /><stop offset="1" stopColor="#0067c8" /></linearGradient></defs>
          <path d="M0 0h11.500v11.500H0zM12.500 0H24v11.500H12.500zM0 12.500h11.500V24H0zM12.500 12.500H24V24H12.500z" fill="url(#win)" />
        </svg>
      </button>
      <label className="ml-[5px] flex h-[31px] w-[216px] items-center rounded-full bg-[#f6f7ec] pr-0.5 pl-2.5">
        <svg viewBox="0 0 16 16" className="size-4 shrink-0" fill="none" stroke="#2a2a2a" strokeWidth="1.600"><circle cx="6.500" cy="6.500" r="5.300" /><path d="M10.500 10.500 15 15" /></svg>
        <span className="sr-only">Search</span>
        <input placeholder="Search" className="ml-[9px] min-w-0 flex-1 text-[13px] placeholder:text-[#666]" />
        <svg viewBox="0 0 46 25" className="h-[25px] w-[46px] shrink-0" aria-hidden="true">
          <path d="M1 22 5 3q18-3 36 0l4 19q-11 3-22 3T1 22z" fill="#b98246" />
          <path d="M6 3q17-4 34 0l2 6q-19-4-38 0z" fill="#dcb078" />
          <path d="M9 21l3-10 3 10zM16 22l3-11 3 11zM24 22l3-11 3 11zM31 21l3-10 3 10z" fill="#e8c48d" />
          <path d="M3 20q20 5 40 0M8 7v5M14 6v5M20 5v5M26 5v5M32 6v5M38 7v5" stroke="#7a4b22" fill="none" />
          <path d="M21 25v-4h4v4z" fill="#3e2410" />
        </svg>
      </label>
      <ul className="ml-1 flex h-full">
        {apps.map((a) => (
          <li key={a.name}>
            <button aria-label={a.name} className="relative flex h-full w-11 items-center justify-center">
              <span className={clsx("flex h-10 w-9 items-center justify-center rounded", a.active && "bg-[#f3f1f8]")}>{a.icon}</span>
              {a.active && (
                <span className="absolute top-1.5 right-1.5 flex size-4 items-center justify-center rounded-full bg-[#06503c] text-[10px] text-white">L</span>
              )}
              {a.running && <span className={clsx("absolute bottom-[4px] h-[3px] rounded-full", a.active ? "w-4 bg-[#2a6cb8]" : "w-1.5 bg-[#8a8a90]")} />}
            </button>
          </li>
        ))}
      </ul>
      <div className="ml-auto flex items-center">
        <button aria-label="Show hidden icons"><MdKeyboardArrowUp className="size-[18px]" /></button>
        <button aria-label="OneDrive" className="ml-[14px]">
          <svg viewBox="0 0 18 16" className="h-4 w-[18px]">
            <path d="M4.500 13A4 4 0 0 1 3 5.500 5.500 5.500 0 0 1 13 5q3.500.5 3.500 4v4z" fill="#9aa0a6" stroke="#333" strokeWidth="1.200" />
            <circle cx="12.500" cy="10.500" r="5" fill="#eef4fb" />
            <path d="M9.500 10a3 3 0 0 1 5.500-1.300V7M15.500 11a3 3 0 0 1-5.500 1.300V14" fill="none" stroke="#1f6fc0" strokeWidth="1.300" />
          </svg>
        </button>
        <button className="ml-4 text-center leading-4">ENG<br />IN</button>
        <button aria-label="Network, sound and battery" className="ml-[18px] flex items-center gap-2">
          <MdWifi className="size-4" />
          <svg viewBox="0 0 17 14" className="h-[14px] w-[17px]" fill="none" stroke="currentColor" strokeWidth="1.200">
            <path d="M1 5h2.500L7 1.500v11L3.500 9H1zM9 5q1.500 2 0 4M11.500 3.500q2.500 3.500 0 7M13.700 1.800q4 5.200 0 10.400" />
          </svg>
          <svg viewBox="0 0 17 13" className="h-[13px] w-[17px]">
            <rect x="1" y="4" width="13" height="8.500" rx="2" fill="#1b1b1b" />
            <path d="M15 6.500v3.500" stroke="#1b1b1b" strokeWidth="1.800" />
            <path d="M1 0v6l3-2h2V1" fill="none" stroke="#1b1b1b" strokeWidth="1.300" />
          </svg>
        </button>
        <button className="ml-[15px] text-right leading-4">12:25<br />22-02-2025</button>
        <button aria-label="Notifications" className="mr-5 ml-2">
          <svg viewBox="0 0 15 16" className="h-4 w-[15px]">
            <path d="M2 12V6Q2 2 6.500 2H9v4h3v6l1 1H1zM4.500 13.500h5q-2.500 3-5 0z" fill="#1b1b1b" />
            <path d="M10 1.500h3.500l-3 3.500H14" fill="none" stroke="#1b1b1b" strokeWidth="1.200" />
            <path d="M5 6h3L5.500 9H8.500" fill="none" stroke="#e9dce6" />
          </svg>
        </button>
      </div>
    </footer>
  );
}

export default function App() {
  return (
    <div className={clsx("flex h-screen flex-col overflow-hidden bg-white", sheetsFont)}>
      <div className={chromeFont}>
        <TabStrip />
        <AddressBar />
        <BookmarksBar />
        <DefaultBrowserBar />
      </div>
      <DocHeader />
      <Toolbar />
      <FormulaBar />
      <Grid />
      <HorizontalScroll />
      <SheetTabs />
      <div className={chromeFont}>
        <Taskbar />
      </div>
    </div>
  );
}
